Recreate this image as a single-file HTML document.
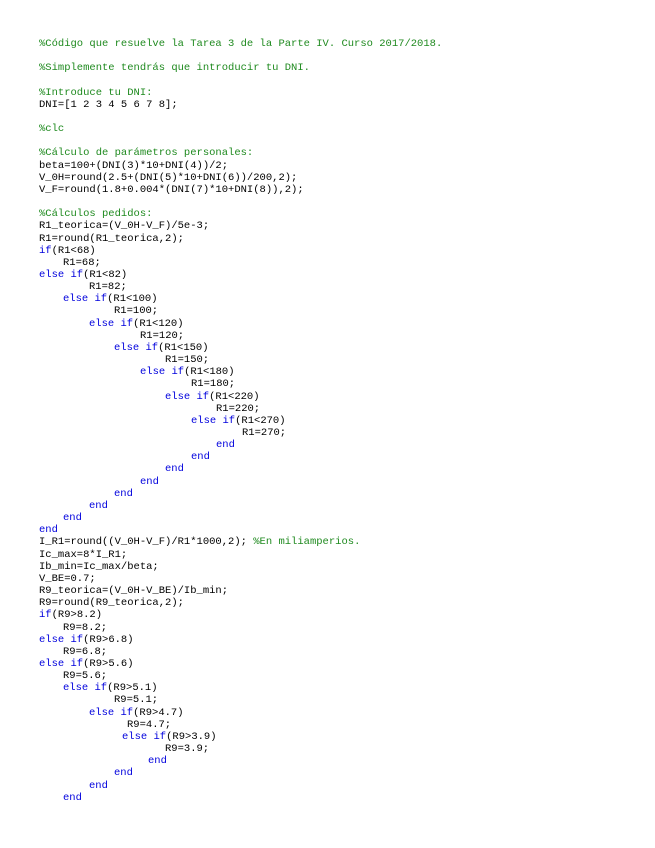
<!DOCTYPE html>
<html><head><meta charset="utf-8"><style>
html,body{margin:0;padding:0;background:#fff;width:655px;height:848px;overflow:hidden}
.c{position:absolute;left:0;top:38px;font-family:"Liberation Mono",monospace;font-size:10.5px;line-height:12.17px;color:#000}
.l{height:12.17px;white-space:pre}
.g{color:#1f8a1f}.b{color:#0000dd}
</style></head><body><div class="c">
<div class="l" style="padding-left:39px"><span class="g">%Código que resuelve la Tarea 3 de la Parte IV. Curso 2017/2018.</span></div>
<div class="l"></div>
<div class="l" style="padding-left:39px"><span class="g">%Simplemente tendrás que introducir tu DNI.</span></div>
<div class="l"></div>
<div class="l" style="padding-left:39px"><span class="g">%Introduce tu DNI:</span></div>
<div class="l" style="padding-left:39px">DNI=[1 2 3 4 5 6 7 8];</div>
<div class="l"></div>
<div class="l" style="padding-left:39px"><span class="g">%clc</span></div>
<div class="l"></div>
<div class="l" style="padding-left:39px"><span class="g">%Cálculo de parámetros personales:</span></div>
<div class="l" style="padding-left:39px">beta=100+(DNI(3)*10+DNI(4))/2;</div>
<div class="l" style="padding-left:39px">V_0H=round(2.5+(DNI(5)*10+DNI(6))/200,2);</div>
<div class="l" style="padding-left:39px">V_F=round(1.8+0.004*(DNI(7)*10+DNI(8)),2);</div>
<div class="l"></div>
<div class="l" style="padding-left:39px"><span class="g">%Cálculos pedidos:</span></div>
<div class="l" style="padding-left:39px">R1_teorica=(V_0H-V_F)/5e-3;</div>
<div class="l" style="padding-left:39px">R1=round(R1_teorica,2);</div>
<div class="l" style="padding-left:39px"><span class="b">if</span>(R1&lt;68)</div>
<div class="l" style="padding-left:63px">R1=68;</div>
<div class="l" style="padding-left:39px"><span class="b">else if</span>(R1&lt;82)</div>
<div class="l" style="padding-left:89px">R1=82;</div>
<div class="l" style="padding-left:63px"><span class="b">else if</span>(R1&lt;100)</div>
<div class="l" style="padding-left:114px">R1=100;</div>
<div class="l" style="padding-left:89px"><span class="b">else if</span>(R1&lt;120)</div>
<div class="l" style="padding-left:140px">R1=120;</div>
<div class="l" style="padding-left:114px"><span class="b">else if</span>(R1&lt;150)</div>
<div class="l" style="padding-left:165px">R1=150;</div>
<div class="l" style="padding-left:140px"><span class="b">else if</span>(R1&lt;180)</div>
<div class="l" style="padding-left:191px">R1=180;</div>
<div class="l" style="padding-left:165px"><span class="b">else if</span>(R1&lt;220)</div>
<div class="l" style="padding-left:216px">R1=220;</div>
<div class="l" style="padding-left:191px"><span class="b">else if</span>(R1&lt;270)</div>
<div class="l" style="padding-left:242px">R1=270;</div>
<div class="l" style="padding-left:216px"><span class="b">end</span></div>
<div class="l" style="padding-left:191px"><span class="b">end</span></div>
<div class="l" style="padding-left:165px"><span class="b">end</span></div>
<div class="l" style="padding-left:140px"><span class="b">end</span></div>
<div class="l" style="padding-left:114px"><span class="b">end</span></div>
<div class="l" style="padding-left:89px"><span class="b">end</span></div>
<div class="l" style="padding-left:63px"><span class="b">end</span></div>
<div class="l" style="padding-left:39px"><span class="b">end</span></div>
<div class="l" style="padding-left:39px">I_R1=round((V_0H-V_F)/R1*1000,2); <span class="g">%En miliamperios.</span></div>
<div class="l" style="padding-left:39px">Ic_max=8*I_R1;</div>
<div class="l" style="padding-left:39px">Ib_min=Ic_max/beta;</div>
<div class="l" style="padding-left:39px">V_BE=0.7;</div>
<div class="l" style="padding-left:39px">R9_teorica=(V_0H-V_BE)/Ib_min;</div>
<div class="l" style="padding-left:39px">R9=round(R9_teorica,2);</div>
<div class="l" style="padding-left:39px"><span class="b">if</span>(R9&gt;8.2)</div>
<div class="l" style="padding-left:63px">R9=8.2;</div>
<div class="l" style="padding-left:39px"><span class="b">else if</span>(R9&gt;6.8)</div>
<div class="l" style="padding-left:63px">R9=6.8;</div>
<div class="l" style="padding-left:39px"><span class="b">else if</span>(R9&gt;5.6)</div>
<div class="l" style="padding-left:63px">R9=5.6;</div>
<div class="l" style="padding-left:63px"><span class="b">else if</span>(R9&gt;5.1)</div>
<div class="l" style="padding-left:114px">R9=5.1;</div>
<div class="l" style="padding-left:89px"><span class="b">else if</span>(R9&gt;4.7)</div>
<div class="l" style="padding-left:127px">R9=4.7;</div>
<div class="l" style="padding-left:122px"><span class="b">else if</span>(R9&gt;3.9)</div>
<div class="l" style="padding-left:165px">R9=3.9;</div>
<div class="l" style="padding-left:148px"><span class="b">end</span></div>
<div class="l" style="padding-left:114px"><span class="b">end</span></div>
<div class="l" style="padding-left:89px"><span class="b">end</span></div>
<div class="l" style="padding-left:63px"><span class="b">end</span></div>
</div></body></html>
